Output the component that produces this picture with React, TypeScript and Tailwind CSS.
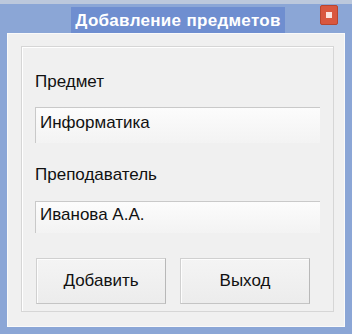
export default function App() {
  const font = { fontFamily: '"Liberation Sans", Arial, sans-serif' };
  return (
    <div className="w-[352px] h-[334px] bg-[#8ba6d6] flex flex-col border-t-[4px] border-[#bcc8dc]" style={font}>
      <div className="h-[29px] flex items-stretch relative">
        <div className="flex-1 flex justify-center pl-[4px]">
          <div className="mt-[3px] h-[26px] bg-[#6f8ed0] px-[4px] flex items-center text-white text-[17px] font-bold tracking-[0.3px] leading-none">
            Добавление предметов
          </div>
        </div>
        <div className="absolute left-[320px] top-[1px] w-[18px] h-[20px] bg-[#d9573f] border border-[#b8452f] rounded-[2px] flex items-center justify-center">
          <div className="w-[6px] h-[6px] bg-[#fbe3de]" />
        </div>
      </div>
      <div className="mx-[7px] mb-[7px] flex-1 bg-[#f0f0f0] border border-[#fafafa] pt-[12px] pl-[13px] pr-[10px] pb-[14px] flex">
        <div className="flex-1 border border-[#d6d6d6] shadow-[inset_1px_1px_0_#ffffff] flex flex-col pl-[13px] pr-[13px] pt-[25px]">
          <div className="text-[17px] leading-[20px] text-[#111]">Предмет</div>
          <div className="mt-[15px] h-[36px] w-[285px] border-t border-l border-[#c9c9c9] bg-gradient-to-b from-[#fcfcfc] to-[#f3f3f3] pl-[4px] pt-[5px] text-[17px] leading-[20px] text-[#111]">
            Информатика
          </div>
          <div className="mt-[22px] text-[17px] leading-[20px] text-[#111]">Преподаватель</div>
          <div className="mt-[16px] h-[32px] w-[285px] border-t border-l border-[#c9c9c9] bg-gradient-to-b from-[#fcfcfc] to-[#f3f3f3] pl-[4px] pt-[3px] text-[17px] leading-[20px] text-[#111]">
            Иванова А.А.
          </div>
          <div className="mt-[25px] flex gap-[14px] pl-[1px]">
            <div className="w-[130px] h-[46px] border border-[#d0d0d0] border-r-[#b8b8b8] border-b-[#c4c4c4] bg-gradient-to-b from-[#f4f4f4] to-[#ececec] shadow-[inset_1px_1px_0_#fdfdfd] flex items-center justify-center text-[17px] text-[#111]">
              Добавить
            </div>
            <div className="w-[130px] h-[46px] border border-[#d0d0d0] border-r-[#b8b8b8] border-b-[#c4c4c4] bg-gradient-to-b from-[#f4f4f4] to-[#ececec] shadow-[inset_1px_1px_0_#fdfdfd] flex items-center justify-center text-[17px] text-[#111]">
              Выход
            </div>
          </div>
        </div>
      </div>
    </div>
  );
}
